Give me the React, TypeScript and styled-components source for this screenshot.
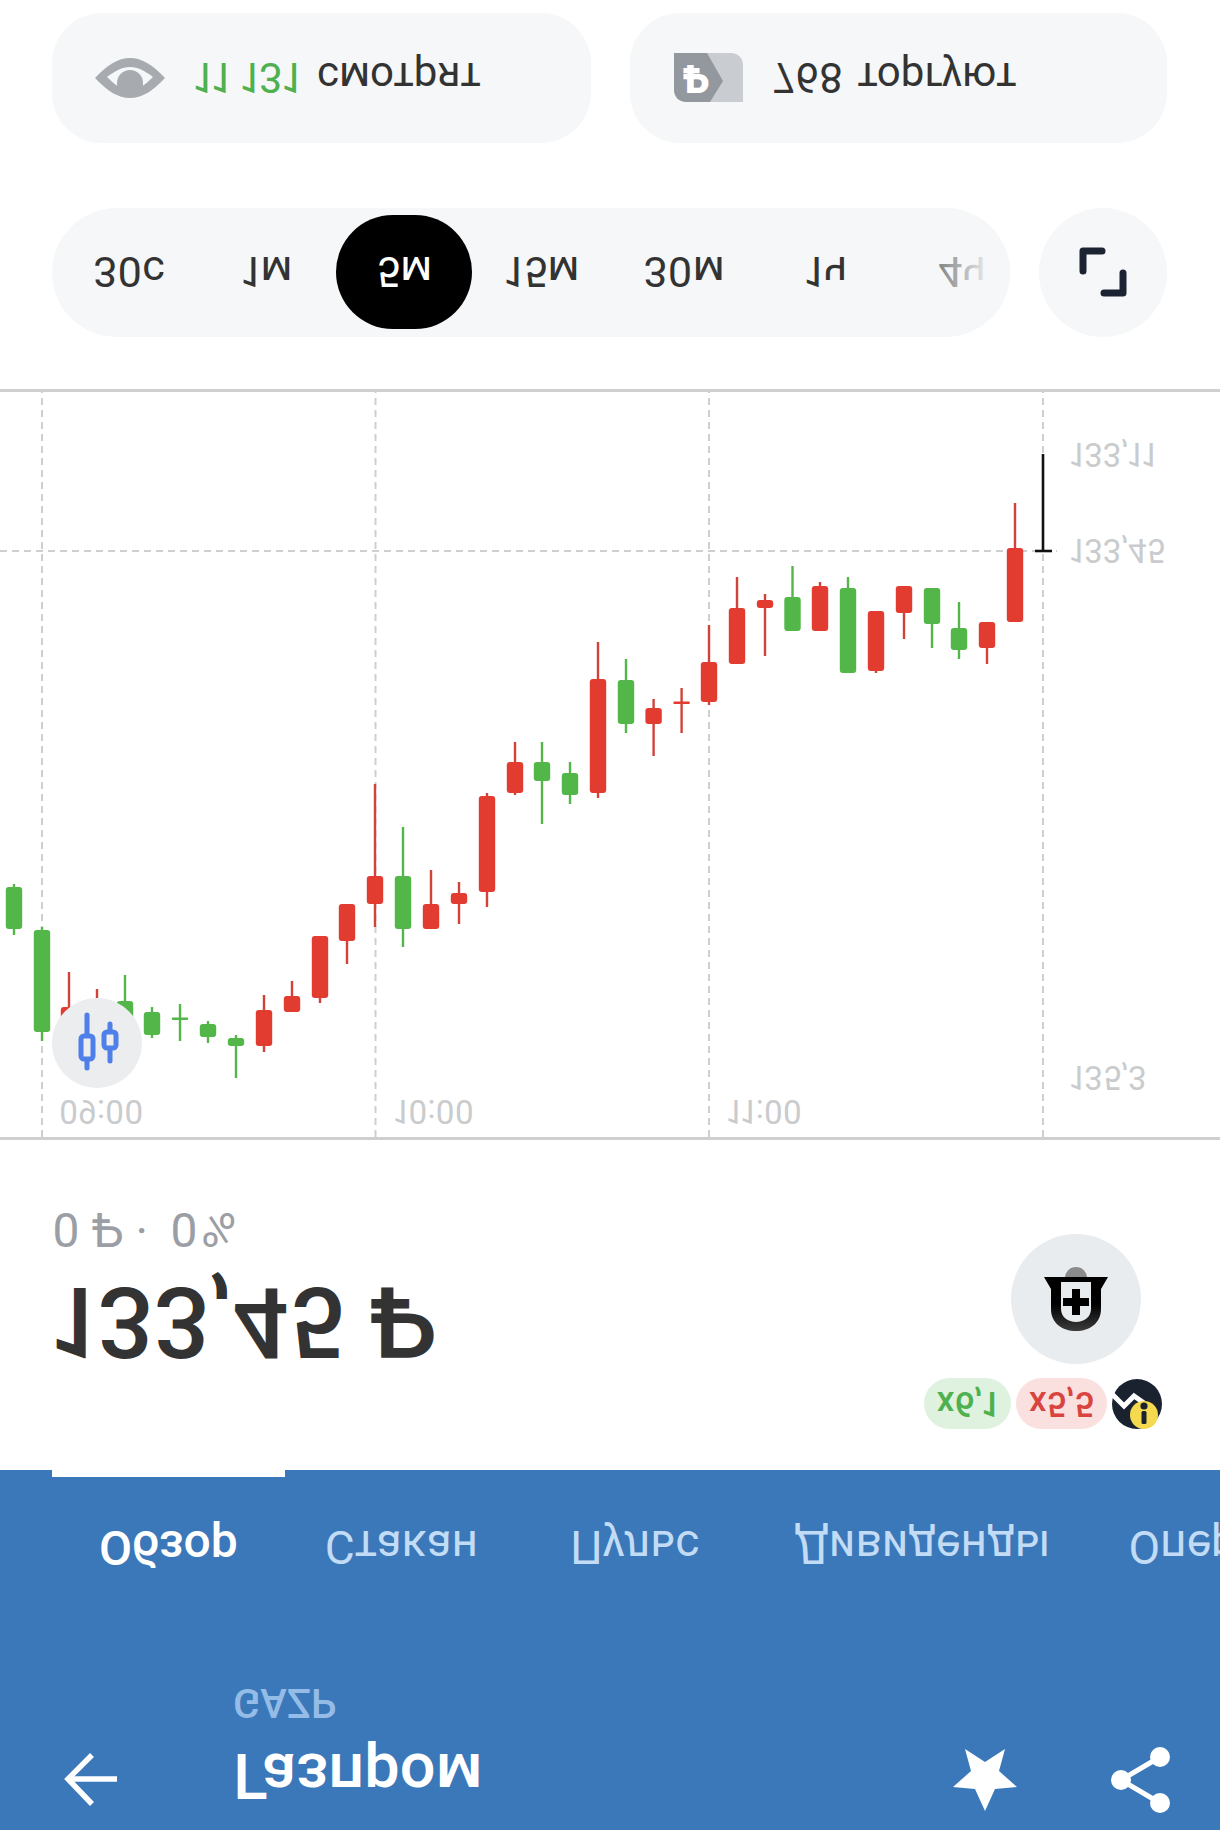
import React from "react";
import styled, { createGlobalStyle } from "styled-components";

const Global = createGlobalStyle`
  html, body { margin: 0; padding: 0; background: #fff; }
  body { font-family: Roboto, "Noto Sans", sans-serif; font-variant-numeric: proportional-nums; }
  * { box-sizing: border-box; }
`;

const Page = styled.div`
  width: 1220px;
  height: 1830px;
  overflow: hidden;
  background: #fff;
  transform: scaleY(-1);
  display: flex;
  flex-direction: column;
`;

const Header = styled.header`
  height: 360px;
  flex: none;
  background: #3b78b9;
  color: #fff;
`;

const TopBar = styled.div`
  height: 150px;
  display: flex;
  align-items: flex-start;
  padding: 22px 49px 0 64px;
`;

const BackIcon = styled.svg`
  width: 55px;
  height: 55px;
  flex: none;
  margin-top: 1px;
`;

const TitleBox = styled.div`
  flex: 1;
  margin-left: 114px;
`;

const Title = styled.div`
  font-size: 63px;
  line-height: 65px;
  font-weight: 500;
`;

const Ticker = styled.div`
  margin-top: 21px;
  font-size: 40px;
  line-height: 40px;
  font-weight: 500;
  color: #94bce6;
`;

const StarIcon = styled.svg`
  width: 64px;
  height: 62px;
  flex: none;
  margin-top: -3px;
`;

const ShareIcon = styled.svg`
  width: 62px;
  height: 70px;
  flex: none;
  margin: -7px 0 0 92px;
`;

const Tabs = styled.nav`
  display: flex;
  margin-top: 109px;
  height: 101px;
  padding-left: 52px;
`;

const Tab = styled.div<{ $active?: boolean; $after?: number }>`
  flex: none;
  font-size: ${(p) => (p.$active ? 48 : 46)}px;
  line-height: 48px;
  font-weight: ${(p) => (p.$active ? 500 : 400)};
  padding: 0 47px;
  height: 101px;
  margin-right: ${(p) => p.$after ?? 0}px;
  color: ${(p) => (p.$active ? "#fff" : "#c3dcf5")};
  border-bottom: 7px solid ${(p) => (p.$active ? "#fff" : "transparent")};
`;

const Quote = styled.section`
  height: 330px;
  flex: none;
  display: flex;
  justify-content: space-between;
  padding: 0 58px 0 52px;
`;

const PriceBox = styled.div`
  padding-top: 98px;
`;

const Price = styled.div`
  font-size: 99px;
  line-height: 100px;
  font-weight: 500;
  color: #333;
  white-space: nowrap;
`;

const Change = styled.div`
  margin-top: 19px;
  font-size: 48px;
  line-height: 48px;
  color: #9b9fa5;
  white-space: nowrap;
`;

const ChangePct = styled.span`
  margin-left: 10px;
  letter-spacing: 3px;
`;

const Side = styled.div`
  padding-top: 40px;
  display: flex;
  flex-direction: column;
  align-items: flex-end;
`;

const Badges = styled.div`
  display: flex;
  align-items: center;
  gap: 5px;
`;

const Badge = styled.div<{ $tone: "green" | "red" }>`
  height: 51px;
  border-radius: 26px;
  width: ${(p) => (p.$tone === "green" ? 87 : 91)}px;
  display: flex;
  align-items: center;
  justify-content: center;
  font-size: 35px;
  font-weight: 500;
  background: ${(p) => (p.$tone === "green" ? "#def2df" : "#fbe0e0")};
  color: ${(p) => (p.$tone === "green" ? "#4eb04f" : "#d9443f")};
`;

const LogoIcon = styled.svg`
  width: 50px;
  height: 52px;
  flex: none;
`;

const RoundAction = styled.div`
  width: 130px;
  height: 130px;
  border-radius: 50%;
  background: #e9ecee;
  margin: 14px 21px 0 0;
  display: flex;
  align-items: center;
  justify-content: center;
`;

const ShieldIcon = styled.svg`
  width: 64px;
  height: 64px;
`;

const Chart = styled.section`
  position: relative;
  height: 751px;
  flex: none;
  border-top: 3px solid #cfcfcf;
  border-bottom: 3px solid #cfcfcf;
`;

const ChartSvg = styled.svg`
  display: block;
  width: 1220px;
  height: 746px;
`;

const AxisLabel = styled.span<{ $left: number; $top: number }>`
  position: absolute;
  left: ${(p) => p.$left}px;
  top: ${(p) => p.$top}px;
  font-size: 33px;
  line-height: 33px;
  color: #c9cbcd;
`;

const ChartToggle = styled.div`
  position: absolute;
  left: 52px;
  top: 49px;
  width: 90px;
  height: 90px;
  border-radius: 50%;
  background: #ebedef;
`;

const ToggleIcon = styled.svg`
  display: block;
  width: 90px;
  height: 90px;
`;

const Periods = styled.div`
  display: flex;
  gap: 29px;
  height: 129px;
  margin: 52px 53px 0 52px;
  flex: none;
`;

const PeriodPill = styled.div`
  position: relative;
  flex: 1;
  height: 129px;
  overflow: hidden;
  border-radius: 65px;
  background: #f5f7f8;
  display: flex;
  align-items: center;
  padding-left: 8px;
`;

const PeriodFade = styled.div`
  position: absolute;
  right: 0;
  top: 0;
  bottom: 0;
  width: 110px;
  background: linear-gradient(to right, rgba(245, 247, 248, 0), #f5f7f8 85%);
`;

const Period = styled.div<{ $active?: boolean; $w: number }>`
  flex: none;
  width: ${(p) => p.$w}px;
  height: 114px;
  border-radius: 57px;
  display: flex;
  align-items: center;
  justify-content: center;
  font-size: 43px;
  background: ${(p) => (p.$active ? "#000" : "transparent")};
  color: ${(p) => (p.$active ? "#fff" : "#333")};
`;

const RoundTool = styled.div`
  flex: none;
  width: 128px;
  height: 129px;
  border-radius: 50%;
  background: #f5f7f8;
  display: flex;
  align-items: center;
  justify-content: center;
`;

const ExpandIcon = styled.svg`
  width: 48px;
  height: 50px;
`;

const Stats = styled.div`
  display: grid;
  grid-template-columns: 539px 537px;
  gap: 39px;
  margin: 65px 0 0 52px;
  flex: none;
`;

const StatPill = styled.div`
  height: 130px;
  border-radius: 50px;
  background: #f5f7f8;
  display: flex;
  align-items: center;
  font-size: 42px;
  color: #333;
  white-space: nowrap;
  word-spacing: 4px;
`;

const EyeIcon = styled.svg`
  width: 70px;
  height: 40px;
  flex: none;
  margin: 0 29px 0 43px;
`;

const TagIcon = styled.svg`
  width: 69px;
  height: 49px;
  flex: none;
  margin: 0 30px 0 44px;
`;

const Viewers = styled.span`
  color: #4eb04f;
  margin-right: 16px;
  word-spacing: 0;
`;

type C = [number, number, number, number, number, "r" | "g"];

const candles: C[] = [
  [1015, 503, 548, 622, 622, "r"],
  [987, 622, 622, 648, 664, "r"],
  [959, 602, 628, 650, 659, "g"],
  [932, 588, 588, 624, 648, "g"],
  [904, 586, 586, 613, 639, "r"],
  [876, 611, 611, 671, 673, "r"],
  [848, 577, 588, 673, 673, "g"],
  [820, 582, 586, 631, 631, "r"],
  [792.5, 566, 597, 631, 631, "g"],
  [765, 594, 600, 608, 656, "r"],
  [737, 577, 608, 664, 664, "r"],
  [709, 625, 662, 702, 705, "r"],
  [681.6, 688, 702, 704, 733, "r"],
  [653.6, 699, 708, 724, 756, "r"],
  [626, 659, 680, 724, 733, "g"],
  [598, 642, 679, 793, 798, "r"],
  [570, 762, 773, 795, 804, "g"],
  [542, 742, 762, 781, 824, "g"],
  [515, 742, 762, 793, 795, "r"],
  [487, 793, 796, 892, 907, "r"],
  [459, 882, 893, 904, 924, "r"],
  [431, 870, 904, 929, 929, "r"],
  [403, 827, 876, 929, 947, "g"],
  [375, 784, 876, 904, 927, "r"],
  [347, 904, 904, 941, 964, "r"],
  [320, 936, 936, 998, 1003, "r"],
  [292, 981, 996, 1012, 1012, "r"],
  [264, 995, 1010, 1046, 1052, "r"],
  [236, 1035, 1038, 1046, 1078, "g"],
  [208, 1021, 1024, 1037, 1043, "g"],
  [180, 1004, 1018, 1020, 1041, "g"],
  [152, 1007, 1012, 1035, 1038, "g"],
  [125, 975, 1001, 1030, 1040, "g"],
  [97, 989, 1004, 1030, 1040, "r"],
  [69, 972, 1007, 1030, 1040, "r"],
  [42, 927, 930, 1032, 1041, "g"],
  [14, 884, 887, 929, 935, "g"],
];

const Y = (y: number) => 1137 - y;
const RED = "#e23b30";
const GREEN = "#52b748";

const gridX = [42, 375.5, 709, 1043];

function ChartDrawing() {
  return (
    <ChartSvg viewBox="0 0 1220 746">
      {gridX.map((x) => (
        <line key={x} x1={x} x2={x} y1={0} y2={746} stroke="#cfcfcf" strokeWidth={2} strokeDasharray="7 5" />
      ))}
      <line x1={0} x2={1057} y1={Y(551)} y2={Y(551)} stroke="#cfcfcf" strokeWidth={2} strokeDasharray="7 5" />
      {candles.map(([x, hi, top, bot, lo, c]) => {
        const col = c === "r" ? RED : GREEN;
        return (
          <g key={x}>
            <line x1={x} x2={x} y1={Y(hi)} y2={Y(lo)} stroke={c === "r" ? "#d0433b" : GREEN} strokeWidth={2.4} />
            <rect x={x - 8.2} width={16.4} y={Y(bot)} height={Math.max(bot - top, 2.4)} rx={bot - top > 5 ? 3 : 1} fill={col} />
          </g>
        );
      })}
      <line x1={1043} x2={1043} y1={Y(454)} y2={Y(552)} stroke="#111" strokeWidth={2.6} />
      <line x1={1035} x2={1052} y1={Y(551)} y2={Y(551)} stroke="#111" strokeWidth={2.6} />
    </ChartSvg>
  );
}

export default function App() {
  return (
    <>
      <Global />
      <Page>
        <Header>
          <TopBar>
            <BackIcon viewBox="0 0 55 55">
              <g transform="matrix(1 0 0 -1 0 55)" fill="none" stroke="#fff" strokeWidth={5.5}>
                <path d="M53 27H4" />
                <path d="M28 3L4 27L28 52" />
              </g>
            </BackIcon>
            <TitleBox>
              <Title>Газпром</Title>
              <Ticker>GAZP</Ticker>
            </TitleBox>
            <StarIcon viewBox="0 0 64 62">
              <g transform="matrix(1 0 0 -1 0 62)">
                <path d="M12 0L32 13L52 0L46 22L64 38L42 40L32 62L22 40L0 38L18 22Z" fill="#fff" />
              </g>
            </StarIcon>
            <ShareIcon viewBox="0 0 62 70">
              <g transform="matrix(1 0 0 -1 0 70)">
                <path d="M51 12L12 35L51 58" fill="none" stroke="#fff" strokeWidth={5} />
                <circle cx={51} cy={12} r={10} fill="#fff" />
                <circle cx={12} cy={35} r={10} fill="#fff" />
                <circle cx={51} cy={58} r={10} fill="#fff" />
              </g>
            </ShareIcon>
          </TopBar>
          <Tabs>
            <Tab $active $after={-7}>Обзор</Tab>
            <Tab $after={-2}>Стакан</Tab>
            <Tab $after={1}>Пульс</Tab>
            <Tab $after={-16}>Дивиденды</Tab>
            <Tab>Операции</Tab>
          </Tabs>
        </Header>

        <Quote>
          <PriceBox>
            <Price>133,45 ₽</Price>
            <Change>
              0 ₽ · <ChangePct>0%</ChangePct>
            </Change>
          </PriceBox>
          <Side>
            <Badges>
              <Badge $tone="green">х6,1</Badge>
              <Badge $tone="red">х5,5</Badge>
              <LogoIcon viewBox="0 0 50 52">
                <g transform="matrix(1 0 0 -1 0 52)">
                  <circle cx={25} cy={26} r={25} fill="#1a2230" />
                  <path d="M0 16L12 28L22 18L32 25" fill="none" stroke="#fff" strokeWidth={5} />
                  <circle cx={32} cy={37} r={14} fill="#f5d94e" />
                  <circle cx={32} cy={28} r={3.6} fill="#1a2230" />
                  <rect x={29.5} y={33} width={5} height={13} rx={1.5} fill="#1a2230" />
                </g>
              </LogoIcon>
            </Badges>
            <RoundAction>
              <ShieldIcon viewBox="0 0 64 64">
                <defs>
                  <linearGradient id="shield" x1="0" y1="0" x2="0" y2="1">
                    <stop offset="0.5" stopColor="#000" />
                    <stop offset="1" stopColor="#3c3c3c" />
                  </linearGradient>
                </defs>
                <g transform="matrix(1 0 0 -1 0 64)">
                  <circle cx={32} cy={11} r={11} fill="#8b8b8b" />
                  <path d="M0 10H64L57 22V42C57 56 46 64 32 64C18 64 7 56 7 42V22Z" fill="url(#shield)" />
                  <path d="M17 15H47V42C47 50 40 55 32 55C24 55 17 50 17 42Z" fill="#e9ecee" />
                  <path d="M28 22H36V31H45V39H36V48H28V39H19V31H28Z" fill="#000" />
                </g>
              </ShieldIcon>
            </RoundAction>
          </Side>
        </Quote>

        <Chart>
          <ChartDrawing />
          <AxisLabel $left={59} $top={9}>09:00</AxisLabel>
          <AxisLabel $left={394} $top={9}>10:00</AxisLabel>
          <AxisLabel $left={727} $top={9}>11:00</AxisLabel>
          <AxisLabel $left={1070} $top={43}>135,3</AxisLabel>
          <AxisLabel $left={1070} $top={570}>133,45</AxisLabel>
          <AxisLabel $left={1070} $top={666}>133,11</AxisLabel>
          <ChartToggle>
            <ToggleIcon viewBox="0 0 90 90">
              <g transform="matrix(1 0 0 -1 0 90)" fill="none" stroke="#4f7fe8" strokeLinecap="round">
                <path d="M35 17V37M35 63V70" strokeWidth={5} />
                <rect x={29} y={38} width={12} height={23} rx={3} strokeWidth={5} />
                <path d="M58 26V33M58 51V63" strokeWidth={5} />
                <rect x={52} y={34} width={12} height={16} rx={3} strokeWidth={5} />
              </g>
            </ToggleIcon>
          </ChartToggle>
        </Chart>

        <Periods>
          <PeriodPill>
            <Period $w={138}>30с</Period>
            <Period $w={138}>1м</Period>
            <Period $w={136} $active>5м</Period>
            <Period $w={140}>15м</Period>
            <Period $w={144}>30м</Period>
            <Period $w={140}>1ч</Period>
            <Period $w={132}>4ч</Period>
            <PeriodFade />
          </PeriodPill>
          <RoundTool>
            <ExpandIcon viewBox="0 0 48 50">
              <g transform="matrix(1 0 0 -1 0 50)" fill="none" stroke="#1c2433" strokeWidth={7} strokeLinecap="round" strokeLinejoin="round">
                <path d="M4 24V4H23" />
                <path d="M44 26V46H25" />
              </g>
            </ExpandIcon>
          </RoundTool>
        </Periods>

        <Stats>
          <StatPill>
            <EyeIcon viewBox="0 0 70 40">
              <g transform="matrix(1 0 0 -1 0 40)">
                <path d="M0 20C12 7 23 0 35 0C47 0 58 7 70 20C58 33 47 40 35 40C23 40 12 33 0 20Z" fill="#a7abb0" />
                <path d="M12 19C20 13 27 9 35 9C43 9 50 13 58 19C50 27 43 32 35 32C27 32 20 27 12 19Z" fill="#f5f7f8" />
                <path d="M22 25A13 13 0 1 1 48 25C48 29 47 33 44 36H26C23 33 22 29 22 25Z" fill="#a7abb0" />
              </g>
            </EyeIcon>
            <Viewers>11 131</Viewers>
            смотрят
          </StatPill>
          <StatPill>
            <TagIcon viewBox="0 0 69 49">
              <path d="M33 0H69V37C69 44 64 49 57 49H33Z" fill="#c9cdd1" />
              <path d="M12 0H36L49 21L33 49H0V12C0 5 5 0 12 0Z" fill="#93979e" />
              <text x={22} y={37} textAnchor="middle" fontSize={38} fontWeight={900} fill="#fff" fontFamily="Roboto">₽</text>
            </TagIcon>
            768 торгуют
          </StatPill>
        </Stats>
      </Page>
    </>
  );
}
